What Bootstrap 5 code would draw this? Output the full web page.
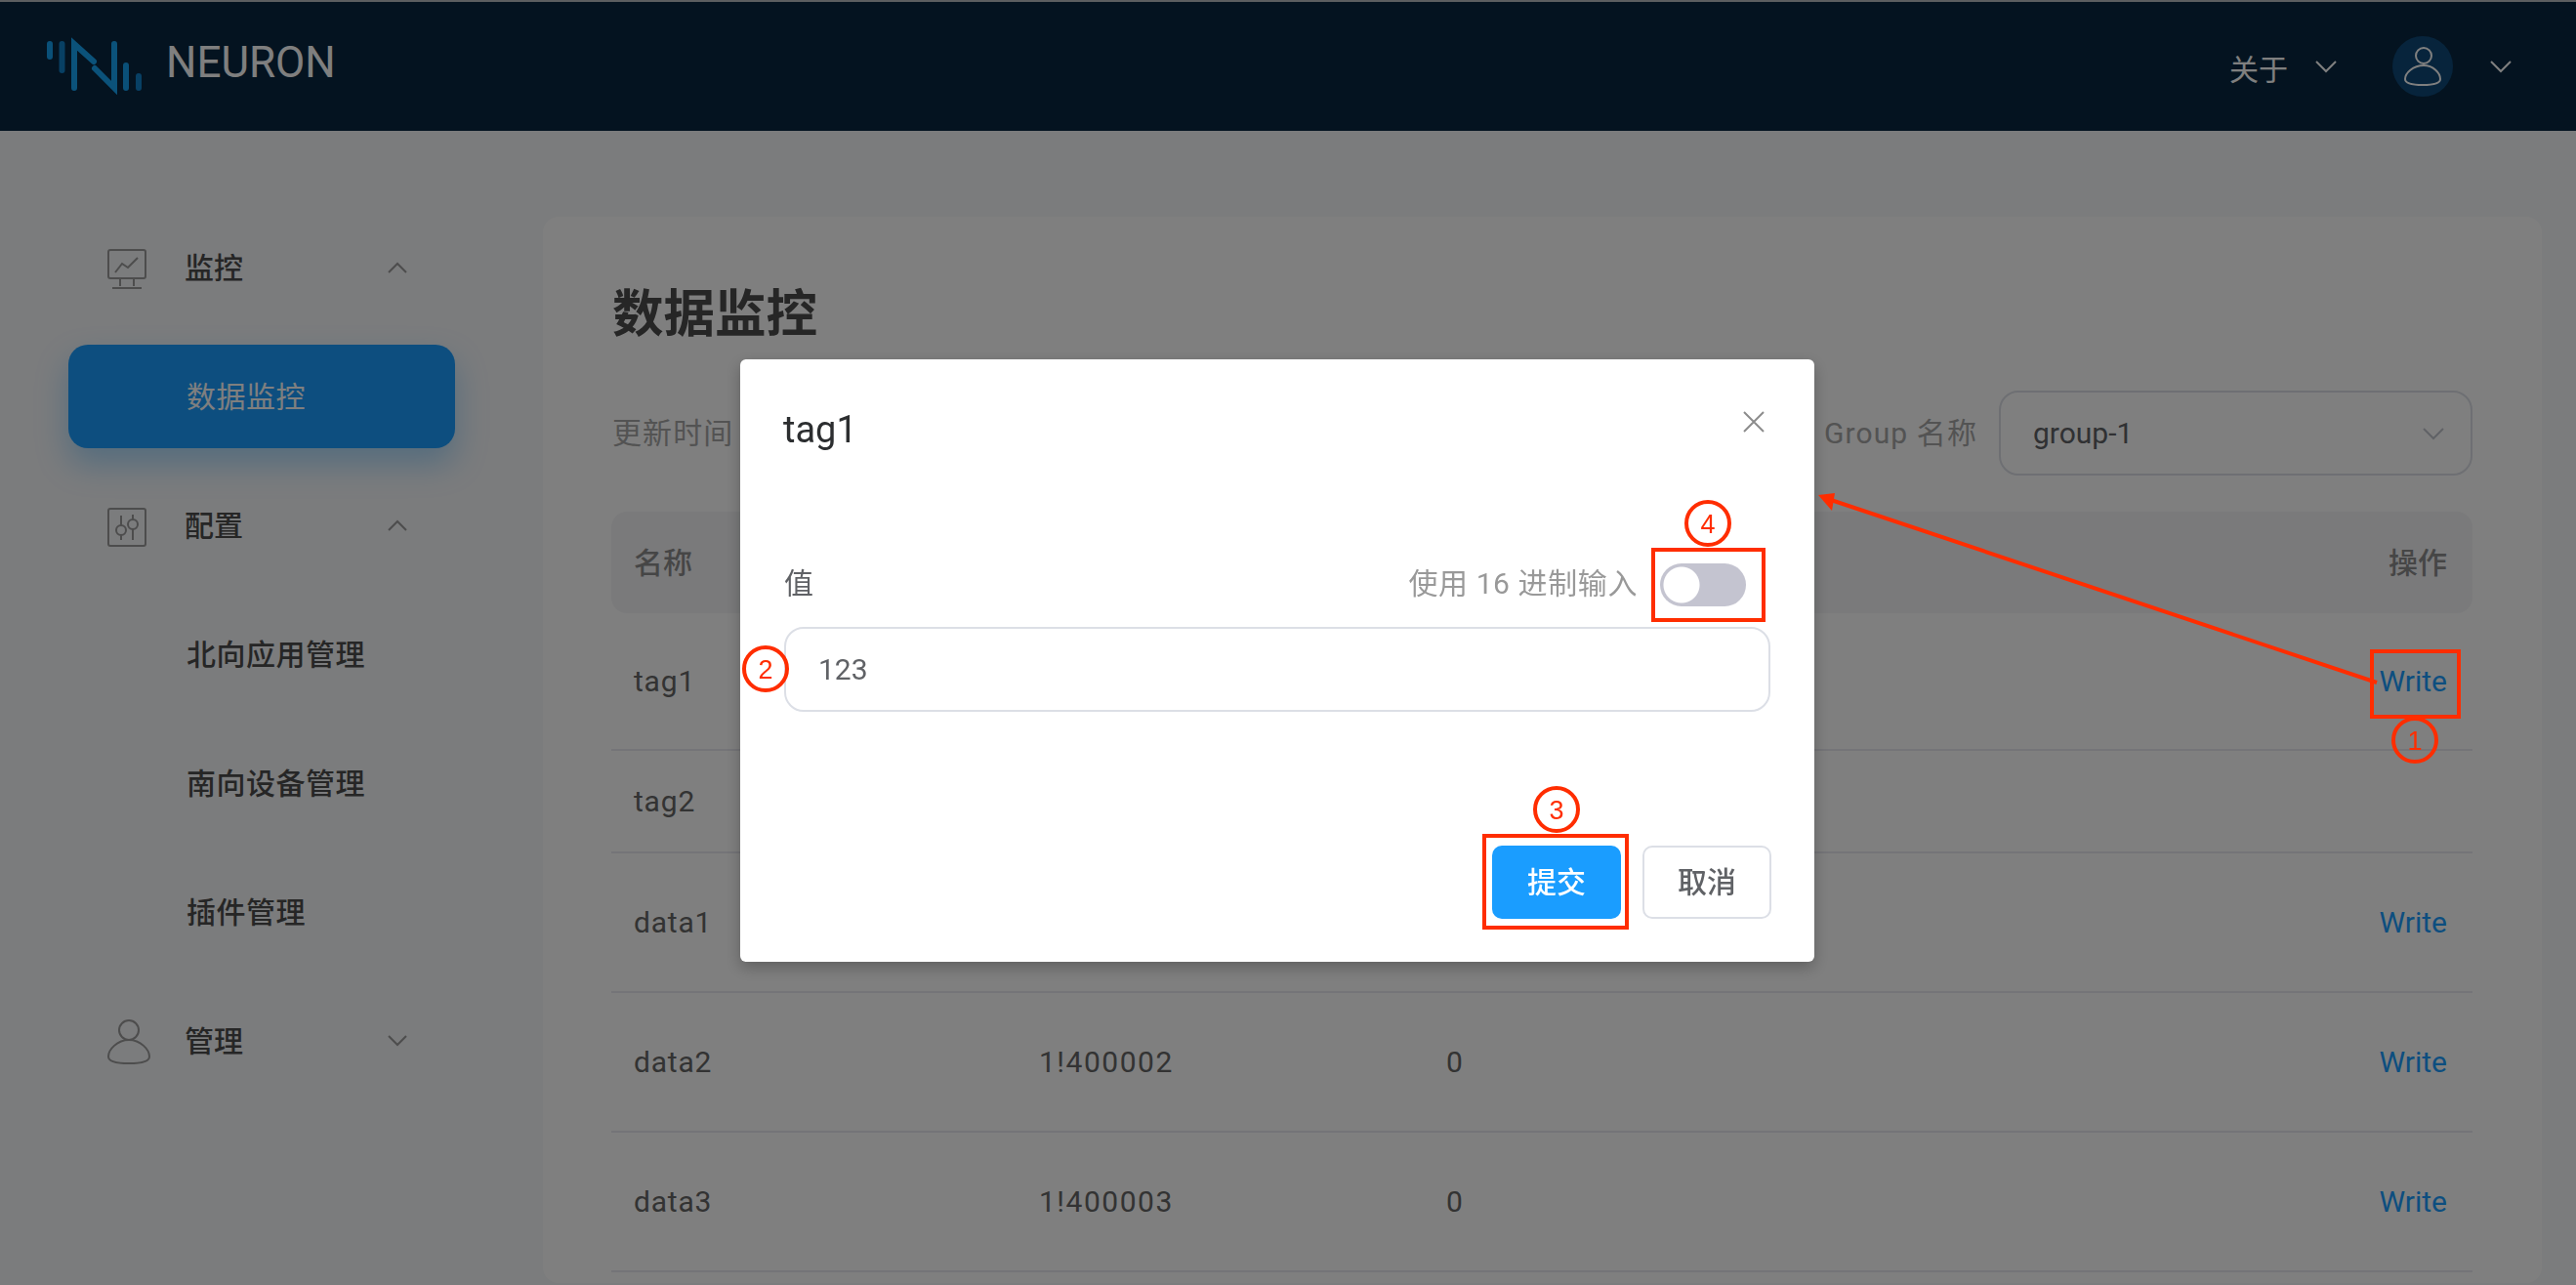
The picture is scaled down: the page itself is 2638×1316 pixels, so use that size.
<!DOCTYPE html>
<html lang="zh-CN">
<head>
  <meta charset="UTF-8">
  <title>Neuron</title>
  <link href="https://cdn.jsdelivr.net/npm/bootstrap@5.3.3/dist/css/bootstrap.min.css" rel="stylesheet">
  <style>
    html, body { height: 100%; overflow: hidden; }
    body {
      background: #f6f8fa;
      color: #606266;
      font-family: Roboto, "Noto Sans CJK SC", sans-serif;
      font-size: 30px;
    }

    .top-bar {
      height: 134px;
      background: #082740;
      border-top: 2px solid #b8bcc0;
      padding: 0 65px 0 45px;
    }
    .logo-text { font-size: 44px; color: #fff; margin-left: 17px; margin-top: -8px; line-height: 1; }
    .about-text { color: #fff; line-height: 1; margin-top: 8px; }
    .about-arrow { margin-left: 27px; }
    .avatar-dot { width: 62px; height: 62px; background: #0e4878; margin-left: 56px; margin-right: 37px; }

    .side-col { width: 556px; flex: none; padding: 87px 90px 0 70px; }
    .side-item { height: 106px; margin-bottom: 26px; color: #4c4c4c; padding-left: 39px; }
    .side-item .side-label { margin-left: 36px; font-weight: 500; width: 208px; }
    .side-sub { padding-left: 121px; font-weight: 500; letter-spacing: .5px; }
    .side-active {
      background: #1a9dff;
      color: #fff;
      border-radius: 20px;
      box-shadow: 0 16px 32px rgba(26, 157, 255, .35);
      font-weight: 400;
    }
    .icon-box { width: 44px; flex: none; }

    .main-card {
      width: 2047px;
      height: 1092px;
      margin-top: 88px;
      background: #fff;
      border-radius: 16px;
      padding: 64px 71px 0 70px;
    }
    .page-title { font-size: 52.5px; font-weight: 700; line-height: 72px; color: #4c4c4c; margin: 0 0 42px 1px; }
    .tool-label { color: #a6a6a6; letter-spacing: 1.1px; }
    .tool-first { margin-left: 1px; }
    .group-select {
      width: 485px;
      height: 87px;
      border: 2px solid #dcdfe6;
      border-radius: 20px;
      padding: 0 26px 0 33px;
      margin-left: 22px;
      color: #606266;
    }

    .data-grid { width: 1906px; margin-top: 37px; table-layout: fixed; border-collapse: separate; border-spacing: 0; }
    .data-grid th, .data-grid td { padding: 0 26px 0 23px; vertical-align: middle; font-size: 30px; }
    .data-grid th { height: 104px; background: #f4f5f7; color: #8c8c8c; font-weight: 500; }
    .data-grid th:first-child { border-radius: 16px 0 0 16px; }
    .data-grid th:last-child { border-radius: 0 16px 16px 0; }
    .data-grid td { border-bottom: 2px solid #e8e8f0; color: #666; height: 143px; letter-spacing: .8px; }
    .data-grid td.addr-cell { letter-spacing: 1.5px; }
    .data-grid tr.row-one td { height: 141px; }
    .data-grid tr.row-two td { height: 105px; }
    .write-link { color: #1a9dff; text-decoration: none; letter-spacing: 0; }

    .modal-dialog.tag-dialog { max-width: none; width: 1100px; margin: 368px 0 0 758px; }
    .tag-dialog .modal-content { height: 617px; border: 0; border-radius: 6px; box-shadow: 0 6px 16px rgba(0, 0, 0, .25); }
    .tag-dialog .modal-header { border: 0; padding: 50px 44px 0 44px; align-items: flex-start; }
    .tag-dialog .modal-title { font-size: 38px; font-weight: 400; line-height: 44px; color: #2c2e30; font-family: Roboto, sans-serif; }
    .close-x { margin-top: 2px; margin-right: 6px; background: none; border: 0; padding: 0; line-height: 0; }
    .tag-dialog .modal-body { padding: 115px 45px 0 45px; flex: none; }
    .val-label { font-size: 30px; margin-top: -3px; }
    .hex-label { font-size: 30px; color: #999; margin-top: -3px; margin-right: 23px; letter-spacing: .6px; }
    .hex-switch { padding: 0; margin: 0; min-height: 0; line-height: 0; margin-right: 25px; }
    .form-switch .form-check-input.hex-input {
      width: 88px;
      height: 44px;
      margin: 0;
      border: 0;
      background-color: #c4c4d0;
      background-image: radial-gradient(circle at 22px 22px, #fff 18px, transparent 19px);
      background-size: auto;
      background-position: 0 0;
    }
    .val-input {
      height: 87px;
      margin-top: 21px;
      border: 2px solid #dcdfe6;
      border-radius: 20px;
      padding: 0 33px;
      font-size: 30px;
      color: #606266;
    }
    .tag-dialog .modal-footer { border: 0; padding: 0 44px 44px 0; margin-top: auto; gap: 22px; }
    .tag-dialog .modal-footer > * { margin: 0; }
    .act-btn { width: 132px; height: 75px; font-size: 30px; font-weight: 500; border-radius: 10px; padding: 0; }
    .act-submit { background: #1a9dff; border: 0; color: #fff; }
    .act-cancel { background: #fff; border: 2px solid #dcdfe6; color: #606266; }

    .mark-layer { position: absolute; left: 0; top: 0; z-index: 1060; pointer-events: none; }
    .mark-layer text { font-family: "Liberation Sans", sans-serif; font-size: 27px; fill: #ff2d00; text-anchor: middle; }
  </style>
</head>
<body>
  <header class="top-bar d-flex align-items-center">
    <svg width="108" height="60" viewBox="45 33 108 60" fill="none" stroke-width="6" stroke-linecap="round">
      <path d="M51 40V53" stroke="#14a0f0"/>
      <path d="M63.500 40V67" stroke="#1080c8"/>
      <path d="M76 85V40L96 58M97 65L117 85V40" stroke="#16a4f5"/>
      <path d="M129 62V85" stroke="#14a0f0"/>
      <path d="M142 73V85" stroke="#1080c8"/>
    </svg>
    <span class="logo-text">NEURON</span>
    <div class="ms-auto d-flex align-items-center">
      <span class="about-text">关于</span>
      <svg class="about-arrow" width="24" height="14" viewBox="0 0 24 14" fill="none" stroke="#fff" stroke-width="2"><path d="M2 2L12 12L22 2"/></svg>
      <span class="avatar-dot rounded-circle d-flex align-items-center justify-content-center">
        <svg width="40" height="42" viewBox="0 0 40 42" fill="none" stroke="#fff" stroke-width="2"><circle cx="21" cy="10" r="8"/><path d="M21 20C10 20 2 28 2 34C2 39 12 40 20 40C28 40 38 39 38 34C38 28 31 20 21 20Z"/></svg>
      </span>
      <svg width="24" height="14" viewBox="0 0 24 14" fill="none" stroke="#fff" stroke-width="2"><path d="M2 2L12 12L22 2"/></svg>
    </div>
  </header>

  <div class="d-flex">
    <nav class="side-col">
      <div class="side-item d-flex align-items-center">
        <span class="icon-box">
          <svg width="42" height="42" viewBox="0 0 42 42" fill="none" stroke="#9a9a9a" stroke-width="2"><rect x="2" y="1" width="38" height="29" rx="2"/><path d="M9 24L16 15L22 19L32 9"/><path d="M14 30V38M28 30V38M6 40H36"/></svg>
        </span>
        <span class="side-label">监控</span>
        <svg width="20" height="12" viewBox="0 0 20 12" fill="none" stroke="#9a9a9a" stroke-width="2"><path d="M1 11L10 2L19 11"/></svg>
      </div>
      <div class="side-item side-active side-sub d-flex align-items-center">数据监控</div>
      <div class="side-item d-flex align-items-center">
        <span class="icon-box">
          <svg width="42" height="42" viewBox="0 0 42 42" fill="none" stroke="#9a9a9a" stroke-width="2"><rect x="2" y="2" width="38" height="38" rx="2"/><path d="M15 9V19M15 29V34M27 8V13M27 23V34"/><circle cx="15" cy="24" r="5"/><circle cx="27" cy="18" r="5"/></svg>
        </span>
        <span class="side-label">配置</span>
        <svg width="20" height="12" viewBox="0 0 20 12" fill="none" stroke="#9a9a9a" stroke-width="2"><path d="M1 11L10 2L19 11"/></svg>
      </div>
      <div class="side-item side-sub d-flex align-items-center">北向应用管理</div>
      <div class="side-item side-sub d-flex align-items-center">南向设备管理</div>
      <div class="side-item side-sub d-flex align-items-center">插件管理</div>
      <div class="side-item d-flex align-items-center">
        <span class="icon-box">
          <svg width="46" height="46" viewBox="0 0 46 46" fill="none" stroke="#9a9a9a" stroke-width="2"><circle cx="23" cy="11" r="10"/><path d="M23 21C11 21 2 31 2 38C2 44 14 45 23 45C32 45 44 44 44 38C44 31 35 21 23 21Z"/></svg>
        </span>
        <span class="side-label">管理</span>
        <svg width="20" height="12" viewBox="0 0 20 12" fill="none" stroke="#9a9a9a" stroke-width="2"><path d="M1 1L10 10L19 1"/></svg>
      </div>
    </nav>

    <main class="main-card">
      <h1 class="page-title">数据监控</h1>
      <div class="d-flex align-items-center">
        <span class="tool-label tool-first">更新时间</span>
        <span class="tool-label ms-auto">Group 名称</span>
        <div class="group-select d-flex align-items-center justify-content-between">
          <span>group-1</span>
          <svg width="24" height="14" viewBox="0 0 24 14" fill="none" stroke="#c0c4cc" stroke-width="2"><path d="M2 2L12 12L22 2"/></svg>
        </div>
      </div>
      <table class="data-grid">
        <colgroup><col style="width:415px"><col style="width:417px"><col><col style="width:200px"></colgroup>
        <thead>
          <tr><th>名称</th><th></th><th></th><th class="text-end">操作</th></tr>
        </thead>
        <tbody>
          <tr class="row-one"><td>tag1</td><td></td><td></td><td class="text-end"><a class="write-link" href="#">Write</a></td></tr>
          <tr class="row-two"><td>tag2</td><td></td><td></td><td></td></tr>
          <tr><td>data1</td><td></td><td></td><td class="text-end"><a class="write-link" href="#">Write</a></td></tr>
          <tr><td>data2</td><td class="addr-cell">1!400002</td><td>0</td><td class="text-end"><a class="write-link" href="#">Write</a></td></tr>
          <tr><td>data3</td><td class="addr-cell">1!400003</td><td>0</td><td class="text-end"><a class="write-link" href="#">Write</a></td></tr>
        </tbody>
      </table>
    </main>
  </div>

  <div class="modal-backdrop show"></div>
  <div class="modal d-block">
    <div class="modal-dialog tag-dialog">
      <div class="modal-content">
        <div class="modal-header">
          <h5 class="modal-title">tag1</h5>
          <button type="button" class="close-x ms-auto" aria-label="Close">
            <svg width="24" height="24" viewBox="0 0 24 24" fill="none" stroke="#8c8c8c" stroke-width="2"><path d="M2 2L22 22M22 2L2 22"/></svg>
          </button>
        </div>
        <div class="modal-body">
          <div class="d-flex align-items-center">
            <span class="val-label">值</span>
            <span class="hex-label ms-auto">使用 16 进制输入</span>
            <div class="form-check form-switch hex-switch">
              <input class="form-check-input hex-input" type="checkbox" role="switch">
            </div>
          </div>
          <div class="val-input d-flex align-items-center">123</div>
        </div>
        <div class="modal-footer">
          <button type="button" class="btn act-btn act-submit">提交</button>
          <button type="button" class="btn act-btn act-cancel">取消</button>
        </div>
      </div>
    </div>
  </div>

  <!-- red notes drawn over the shot -->
  <svg class="mark-layer" width="2638" height="1316" viewBox="0 0 2638 1316" fill="none">
    <g stroke="#ff2d00" stroke-width="4">
      <rect x="2429" y="667" width="89" height="67"/>
      <rect x="1693" y="563" width="113" height="72"/>
      <rect x="1520" y="856" width="146" height="94"/>
      <circle cx="2473" cy="758" r="22"/>
      <circle cx="784" cy="685" r="22"/>
      <circle cx="1594" cy="829" r="22"/>
      <circle cx="1749" cy="536" r="22"/>
      <path d="M2434 699L1872 511"/>
    </g>
    <path d="M1862 507L1879 505L1876 523Z" fill="#ff2d00"/>
    <text x="2473" y="768">1</text>
    <text x="784" y="695">2</text>
    <text x="1594" y="839">3</text>
    <text x="1749" y="546">4</text>
  </svg>

  <script src="https://cdn.jsdelivr.net/npm/bootstrap@5.3.3/dist/js/bootstrap.bundle.min.js"></script>
</body>
</html>
